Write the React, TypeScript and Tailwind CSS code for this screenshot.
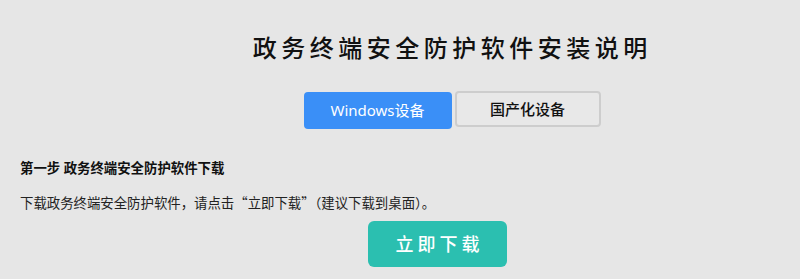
import React from "react";

export default function App() {
  return (
    <div
      className="w-[800px] h-[279px] bg-[#e6e6e6] overflow-hidden flex flex-col"
      style={{ fontFamily: '"Noto Sans", "Noto Sans CJK SC", sans-serif' }}
    >
      <div className="pl-[100px] pt-[32px] flex justify-center">
        <h1 className="text-[24px] leading-[32px] font-medium tracking-[4.5px] text-[#111] mr-[-4.5px]">
          政务终端安全防护软件安装说明
        </h1>
      </div>
      <div className="pl-[104px] mt-[27px] flex justify-center gap-[3px]">
        <button className="w-[148px] h-[37px] mt-[1px] rounded-[4px] bg-[#3a8ff7] text-white text-[15px] flex items-center justify-center">
          Windows设备
        </button>
        <button className="w-[146px] h-[36px] rounded-[4px] bg-[#e8e8e8] border-2 border-[#cdcdcd] text-[#111] text-[15px] font-medium flex items-center justify-center">
          国产化设备
        </button>
      </div>
      <div className="pl-[20px] mt-[29px] text-[13.4px] leading-[20px] font-bold text-[#111]">
        第一步 政务终端安全防护软件下载
      </div>
      <div
        className="pl-[20px] mt-[14px] text-[13.4px] leading-[20px] text-[#222]"
        style={{ fontFamily: '"Noto Sans CJK SC", sans-serif' }}
      >
        下载政务终端安全防护软件，请点击“立即下载”（建议下载到桌面）。
      </div>
      <div className="pl-[75px] mt-[9px] flex justify-center">
        <button className="w-[139px] h-[46px] rounded-[6px] bg-[#2bbfb0] text-white text-[18px] font-medium tracking-[4px] pl-[4px] flex items-center justify-center">
          立即下载
        </button>
      </div>
    </div>
  );
}
